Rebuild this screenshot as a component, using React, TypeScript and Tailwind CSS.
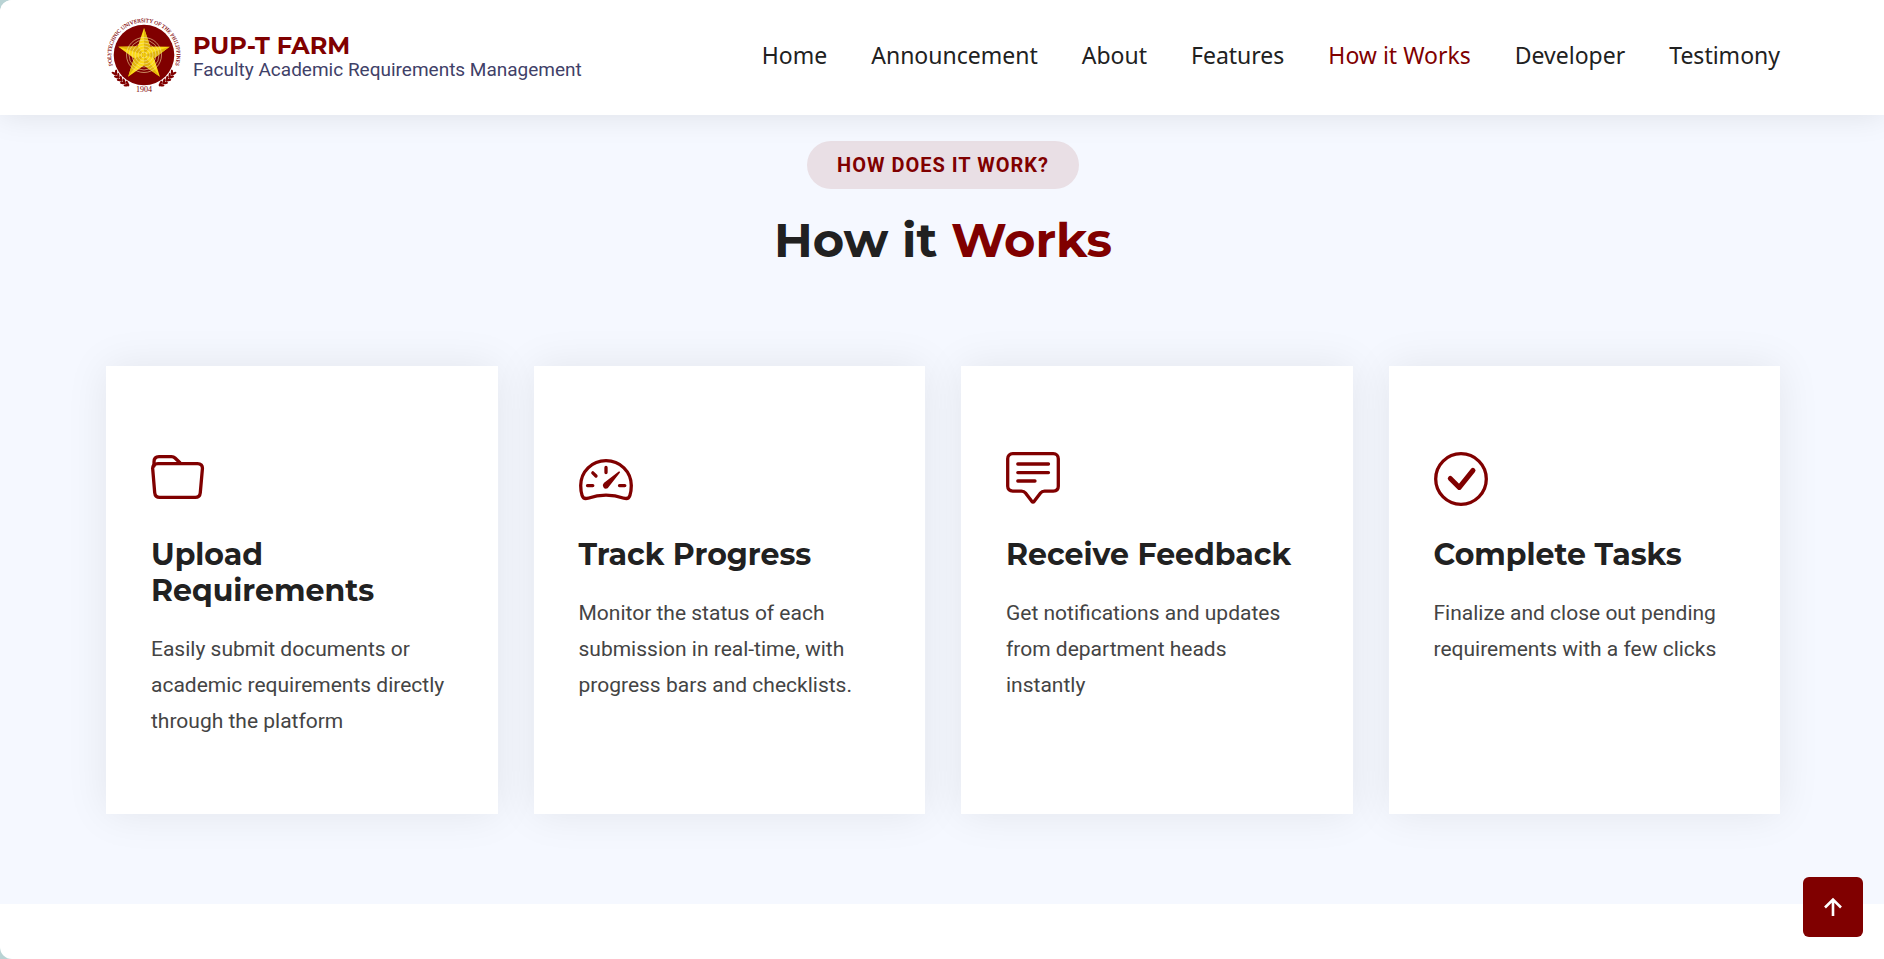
import type { ReactNode } from "react";

const NAV = ["Home", "Announcement", "About", "Features", "How it Works", "Developer", "Testimony"];
const ACTIVE = "How it Works";

function starPoints(cx: number, cy: number, outer: number, inner: number) {
  return Array.from({ length: 10 }, (_, i) => {
    const r = i % 2 === 0 ? outer : inner;
    const a = -Math.PI / 2 + (i * Math.PI) / 5;
    return [cx + r * Math.cos(a), cy + r * Math.sin(a)];
  });
}

const STAR = starPoints(38, 38, 27, 10.6);

function Seal() {
  const leaves = [120, 127, 134, 141, 148];
  return (
    <svg viewBox="0 0 76 76" className="size-[76px] shrink-0" aria-hidden="true">
      <defs>
        <path id="seal-ring" d="M 9.3 53.9 A 32.8 32.8 0 1 1 66.7 53.9" />
      </defs>
      <circle cx="38" cy="38" r="30.3" fill="#800000" />
      <polygon points={STAR.map((p) => p.join(",")).join(" ")} fill="#fbd914" />
      {STAR.map((p, i) => {
        if (i % 2 === 1) return null;
        const q = STAR[(i + 1) % 10];
        return <polygon key={i} points={`38,38 ${p.join(",")} ${q.join(",")}`} fill="#e0b40c" />;
      })}
      {[3, 6, 9, 12, 15, 17.5].map((r) => (
        <circle key={r} cx="38" cy="38" r={r} fill="none" stroke="#f6e3a0" strokeWidth="0.8" opacity="0.75" />
      ))}
      <text fill="#800000" fontFamily="Liberation Serif, serif" fontSize="5.4" stroke="#800000" strokeWidth="0.1">
        <textPath href="#seal-ring" startOffset="50%" textAnchor="middle">
          POLYTECHNIC UNIVERSITY OF THE PHILIPPINES
        </textPath>
      </text>
      {leaves.map((a) => (
        <g key={a} fill="#800000">
          <g transform={`rotate(${a} 38 38)`}>
            <ellipse cx="71" cy="38" rx="1.2" ry="3" transform="rotate(35 71 38)" />
            <ellipse cx="73" cy="38" rx="1.2" ry="3" transform="rotate(-35 73 38)" />
          </g>
          <g transform={`rotate(${180 - a} 38 38)`}>
            <ellipse cx="71" cy="38" rx="1.2" ry="3" transform="rotate(-35 71 38)" />
            <ellipse cx="73" cy="38" rx="1.2" ry="3" transform="rotate(35 73 38)" />
          </g>
        </g>
      ))}
      <text x="38" y="74.500" textAnchor="middle" fill="#800000" fontFamily="Liberation Serif, serif" fontSize="8">
        1904
      </text>
    </svg>
  );
}

function Icon({ children }: { children: ReactNode }) {
  return (
    <svg
      viewBox="0 0 54 54"
      className="size-[54px] text-[#800000]"
      fill="none"
      stroke="currentColor"
      strokeWidth="3.3"
      strokeLinecap="round"
      strokeLinejoin="round"
      aria-hidden="true"
    >
      {children}
    </svg>
  );
}

const FolderIcon = () => (
  <Icon>
    <path d="M7 11.6H46.5C49.8 11.6 51.7 13.6 51.4 16.8L49.3 40.6C49 43.8 47.3 45.4 44.3 45.4H8.7C5.7 45.4 4 43.8 3.7 40.6L1.7 16.8C1.4 13.6 3.5 11.6 7 11.6Z" />
    <path d="M3 14V10C3 6.600 5 4.700 8 4.700H20.500C22 4.700 23 5 24 6L29 10.800" />
  </Icon>
);

const GaugeIcon = () => (
  <Icon>
    <path d="M1.700 33.600C1.700 19.500 13 8.600 27 8.600S52.300 19.500 52.300 33.600C52.300 37.500 51.900 40.500 50.900 43.500C50 46.200 47.600 47 45 46.200C33 42 21 42 9 46.200C6.400 47 4 46.200 3.100 43.500C2.100 40.500 1.700 37.500 1.700 33.600Z" />
    <path d="M27 15.500V20.500M13.800 20.800L17 24M8.500 33.600H13.800M40.500 33.600H45.800" />
    <path d="M40.200 20.200L25.600 31.400C23.500 33.500 25.500 36.800 28.200 35.600Z" fill="currentColor" strokeWidth="1.600" />
  </Icon>
);

const MessageIcon = () => (
  <Icon>
    <path d="M6.700 1.700H47.300C50.300 1.700 52.300 3.700 52.300 6.700V34.300C52.300 37.300 50.300 39.100 47.300 39.100H38.500C36.500 39.100 35.500 39.800 34.500 41.100L28.200 49.300C27.400 50.200 26.600 50.200 25.800 49.300L19.500 41.100C18.500 39.800 17.500 39.100 15.500 39.100H6.700C3.700 39.100 1.700 37.300 1.700 34.300V6.700C1.700 3.700 3.700 1.700 6.700 1.700Z" />
    <path d="M11.800 12H42.500M11.800 20.600H42.500M11.800 29H29" />
  </Icon>
);

const CheckIcon = () => (
  <Icon>
    <circle cx="27" cy="27" r="25.300" />
    <path d="M16.300 26.400L25.300 35.400L39 18.400" strokeWidth="5" />
  </Icon>
);

const STEPS = [
  {
    icon: <FolderIcon />,
    title: "Upload Requirements",
    text: "Easily submit documents or academic requirements directly through the platform",
  },
  {
    icon: <GaugeIcon />,
    title: "Track Progress",
    text: "Monitor the status of each submission in real-time, with progress bars and checklists.",
  },
  {
    icon: <MessageIcon />,
    title: "Receive Feedback",
    text: "Get notifications and updates from department heads instantly",
  },
  {
    icon: <CheckIcon />,
    title: "Complete Tasks",
    text: "Finalize and close out pending requirements with a few clicks",
  },
];

export default function App() {
  return (
    <div className="bg-[#b9d3d4]">
      <div className="min-h-screen overflow-hidden rounded-l-xl bg-white font-[Roboto,sans-serif]">
        <header className="relative z-10 flex h-[115px] items-center justify-between bg-white pr-[104px] pl-[106px] pb-[5px] shadow-[0_0_30px_rgba(0,0,0,0.1)]">
          <a href="#home" className="flex items-center gap-[11px]">
            <Seal />
            <span className="flex flex-col pt-[6px]">
              <span className="font-[Montserrat,sans-serif] text-2xl leading-6 font-bold text-[#800000]">
                PUP-T FARM
              </span>
              <span className="text-[19px] leading-6 text-[#3f4168]">Faculty Academic Requirements Management</span>
            </span>
          </a>
          <nav className="flex gap-11 font-['Noto_Sans',sans-serif] text-[23px]">
            {NAV.map((item) => (
              <a
                key={item}
                href={`#${item.toLowerCase().replaceAll(" ", "-")}`}
                className={item === ACTIVE ? "text-[#800000]" : "text-[#212121]"}
              >
                {item}
              </a>
            ))}
          </nav>
        </header>

        <main className="bg-[#f5f8ff] pr-[104px] pl-[106px] pt-[26px] pb-[90px]">
          <div className="flex flex-col items-center">
            <span className="rounded-full bg-[#e9dfe5] px-[30px] py-3 text-xl leading-6 font-bold tracking-[1px] text-[#800000] uppercase">
              How does it work?
            </span>
            <h2 className="mt-[22px] mb-24 font-[Montserrat,sans-serif] text-5xl leading-[59px] font-bold text-[#212121]">
              How it <span className="text-[#800000]">Works</span>
            </h2>
          </div>
          <div className="grid grid-cols-4 gap-9">
            {STEPS.map((step) => (
              <article key={step.title} className="bg-white px-[45px] pt-[86px] pb-[75px] shadow-[0_0_40px_rgba(0,0,0,0.08)]">
                {step.icon}
                <h3 className="mt-[31px] font-[Montserrat,sans-serif] text-3xl leading-9 font-bold text-[#212121]">
                  {step.title}
                </h3>
                <p className="mt-[22px] text-[21px] leading-9 text-[#444444]">{step.text}</p>
              </article>
            ))}
          </div>
        </main>
      </div>

      <button
        type="button"
        aria-label="Back to top"
        className="fixed right-[21px] bottom-[22px] z-20 flex size-[60px] items-center justify-center rounded-md bg-[#800000] text-white"
      >
        <svg viewBox="0 0 20 20" className="size-5" fill="none" stroke="currentColor" strokeWidth="2.6" aria-hidden="true">
          <path d="M10 19V2.500M2 10.500L10 2.500L18 10.500" />
        </svg>
      </button>
    </div>
  );
}
